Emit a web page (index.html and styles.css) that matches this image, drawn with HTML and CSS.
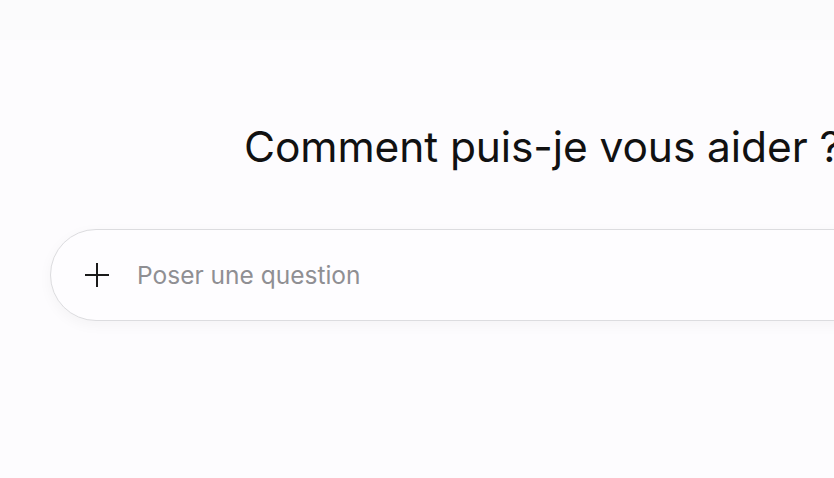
FILE: index.html
```html
<!DOCTYPE html>
<html lang="fr">
<head>
    <meta charset="UTF-8">
    <meta name="viewport" content="width=device-width, initial-scale=1.0">
    <title>Assistant</title>
    <link rel="stylesheet" href="styles.css">
</head>
<body>
    <div class="topbar"></div>
    <div class="page">
        <!-- titre -->
        <h1 class="title">Comment puis-je vous aider ?</h1>
        <!-- zone de saisie -->
        <div class="composer">
            <div class="plus">
                <svg width="26" height="26" viewBox="0 0 26 26">
                    <path d="M13 1v24M1 13h24" stroke="#1a1a1a" stroke-width="2" fill="none"/>
                </svg>
            </div>
            <input class="ask" type="text" placeholder="Poser une question">
        </div>
    </div>
</body>
</html>
```

FILE: styles.css
```css
*{
    margin: 0;
    padding: 0;
    box-sizing: border-box;
}
html, body{
    height: 100%;
    overflow: hidden;
}
body{
    background: #fdfcfe;
    font-family: Inter, "Noto Sans", sans-serif;
    color: #111;
}
.topbar{
    height: 40px;
    background: #fbfbfc;
}
.page{
    width: 985px;
    margin-left: 50px;
    padding-top: 82px;
}
.title{
    text-align: center;
    font-size: 42.5px;
    font-weight: 400;
    line-height: 50px;
    letter-spacing: -0.1px;
}
.composer{
    margin-top: 57px;
    height: 92px;
    border: 1px solid #dcdcdf;
    border-radius: 46px;
    background: #fefdff;
    box-shadow: 0 4px 14px rgba(0, 0, 0, .04);
    display: flex;
    align-items: center;
    padding-left: 33px;
}
.plus{
    width: 26px;
    height: 26px;
    display: flex;
}
.ask{
    margin-left: 27px;
    border: none;
    outline: none;
    background: transparent;
    font-family: Inter, "Noto Sans", sans-serif;
    font-size: 24.5px;
    color: #111;
    flex: 1;
}
.ask::placeholder{
    color: #8f8f93;
}
```
